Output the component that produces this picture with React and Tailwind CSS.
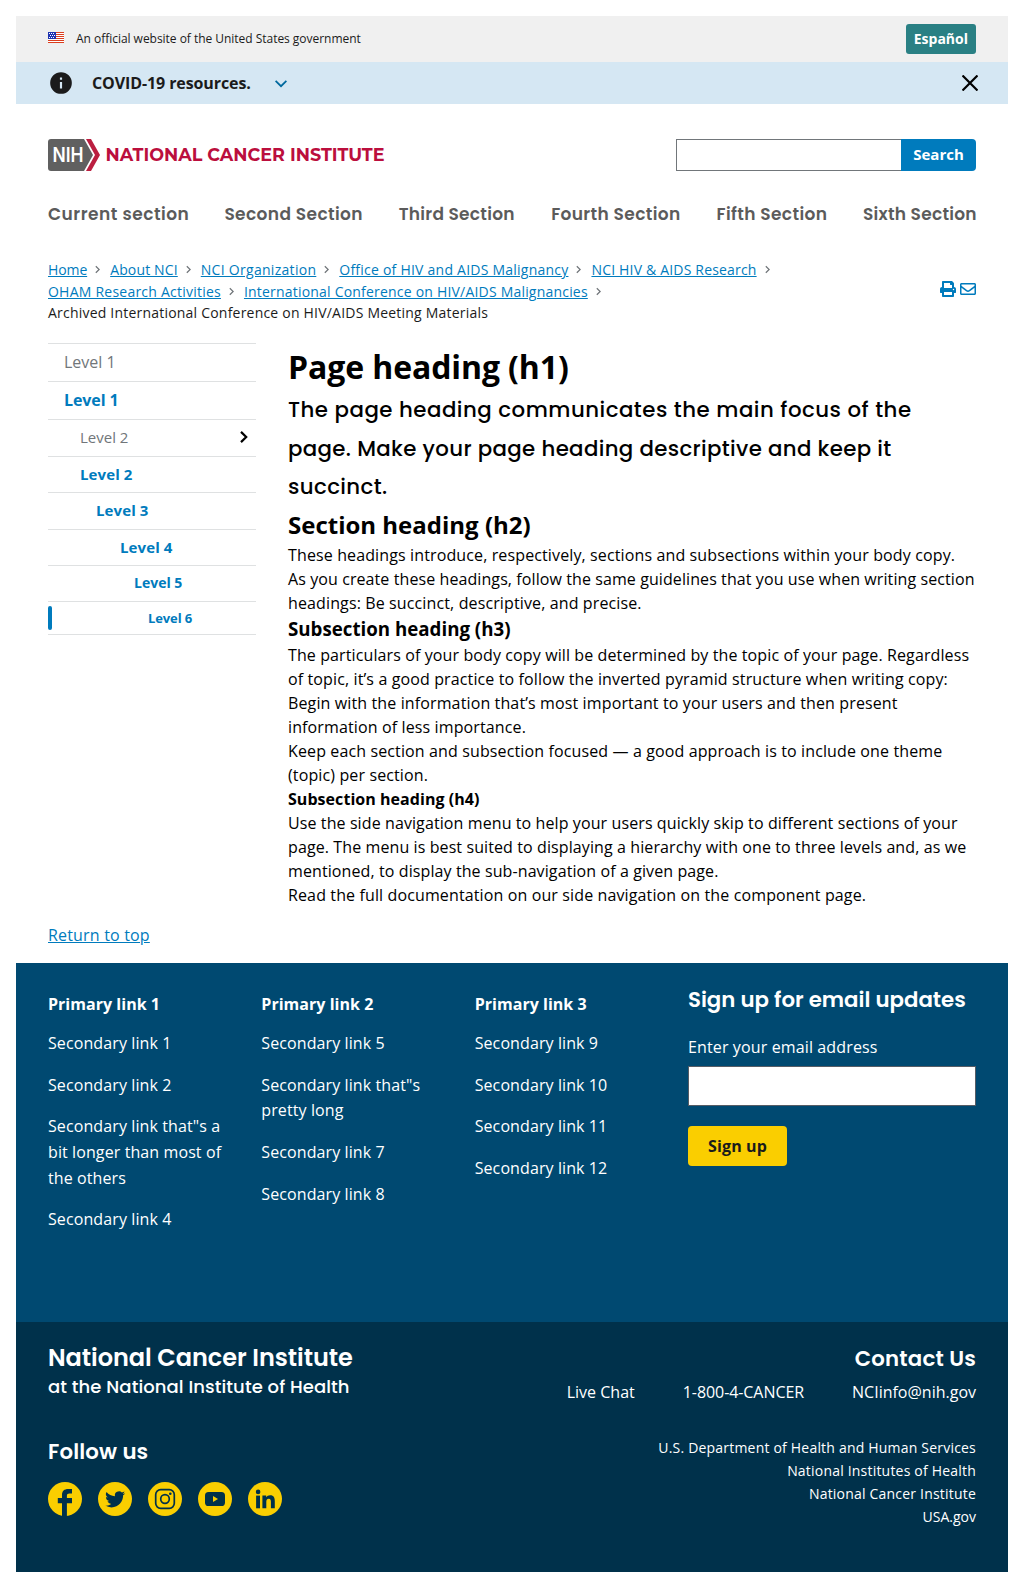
import React from "react";

const crumbs = [
  ["Home", "tracking-[-0.1px]"],
  ["About NCI", "tracking-[0.14px]"],
  ["NCI Organization", "tracking-[0.29px]"],
  ["Office of HIV and AIDS Malignancy", "tracking-[0.23px]"],
  ["NCI HIV & AIDS Research", "tracking-[0.18px]"],
  ["OHAM Research Activities", "tracking-[0.23px]"],
  ["International Conference on HIV/AIDS Malignancies", "tracking-[0.2px]"],
];

const nav = [
  ["Current section", "w-[140px] tracking-[0.5px]"],
  ["Second Section", "w-[138px] tracking-[0.38px]"],
  ["Third Section", "w-[116px] tracking-[0.25px]"],
  ["Fourth Section", "w-[129px] tracking-[0.37px]"],
  ["Fifth Section", "w-[110px] tracking-[0.37px]"],
  ["Sixth Section", "w-[113px] tracking-[0.25px]"],
];

const side = [
  ["Level 1", "h-[38px] pl-4 pb-px text-[16px] text-[#71767a]"],
  ["Level 1", "h-[38px] pl-4 pb-px text-[16px] font-bold tracking-[-0.1px] text-[#007bbd]"],
  ["Level 2", "h-[37px] pl-8 pb-[2px] text-[15px] text-[#71767a]", true],
  ["Level 2", "h-[36px] pl-8 pb-px text-[15px] font-bold tracking-[0.1px] text-[#007bbd]"],
  ["Level 3", "h-[37px] pl-12 pb-[2px] text-[15px] font-bold tracking-[0.1px] text-[#007bbd]"],
  ["Level 4", "h-[36px] pl-[72px] pb-px text-[15px] font-bold tracking-[0.1px] text-[#007bbd]"],
  ["Level 5", "h-[36px] pl-[86px] pb-px text-[14px] font-bold text-[#007bbd]"],
  ["Level 6", "h-[33px] pl-[100px] text-[13px] font-bold tracking-[-0.1px] text-[#007bbd]"],
];

const columns = [
  ["Primary link 1", ["Secondary link 1", "Secondary link 2", 'Secondary link that"s a bit longer than most of the others', "Secondary link 4"]],
  ["Primary link 2", ["Secondary link 5", 'Secondary link that"s pretty long', "Secondary link 7", "Secondary link 8"]],
  ["Primary link 3", ["Secondary link 9", "Secondary link 10", "Secondary link 11", "Secondary link 12"]],
];

function Flag() {
  return (
    <svg width="16" height="11" viewBox="0 0 16 11" shapeRendering="crispEdges">
      <rect width="16" height="11" fill="#fff" />
      {[0, 2, 4, 6, 8, 10].map((y) => (
        <rect key={y} y={y} width="16" height="1" fill="#db3e1f" />
      ))}
      <rect width="8" height="7" fill="#1e33b1" />
      {[[1, 1], [3, 1], [5, 1], [2, 3], [4, 3], [6, 3], [1, 5], [3, 5], [5, 5]].map(([x, y]) => (
        <rect key={x + "-" + y} x={x} y={y} width="1" height="1" fill="#fff" />
      ))}
    </svg>
  );
}

function Chevron({ className, size }) {
  return (
    <svg className={className} width={size} height={size} viewBox="0 0 24 24" fill="currentColor">
      <path d="M10 6 8.59 7.41 13.17 12l-4.58 4.59L10 18l6-6z" />
    </svg>
  );
}

function Logo() {
  return (
    <svg width="338" height="32" viewBox="0 0 338 32">
      <path d="M3 0h33l9 16-9 16H3a3 3 0 0 1-3-3V3a3 3 0 0 1 3-3z" fill="#606060" />
      <path d="M38 0h5l9 16-9 16h-5l9-16z" fill="#bb1f40" />
      <text x="4.5" y="23.3" textLength="31" lengthAdjust="spacingAndGlyphs" fill="#fff" fontFamily="Inter, sans-serif" fontWeight="600" fontSize="19.5">NIH</text>
      <text x="57.5" y="22" textLength="279" lengthAdjust="spacingAndGlyphs" fill="#bb0e3d" fontFamily="Montserrat, Inter, sans-serif" fontWeight="700" fontSize="18">NATIONAL CANCER INSTITUTE</text>
    </svg>
  );
}

const glyphs = [
  <path key="f" d="M14 34V21.2H9.8V16H14v-3C14 9 16.2 7 20.3 7H24v4.6h-2.6c-1.7 0-2.5.8-2.5 2.2V16H24v5.2h-5.1V34z" />,
  <path key="t" transform="translate(7.2 7.4) scale(.83)" d="M23.95 4.57a10 10 0 0 1-2.82.77 4.96 4.96 0 0 0 2.16-2.72c-.95.56-2 .96-3.13 1.18a4.92 4.92 0 0 0-8.38 4.48C7.69 8.1 4.07 6.13 1.64 3.16a4.92 4.92 0 0 0 1.52 6.57 4.9 4.9 0 0 1-2.23-.61v.06a4.92 4.92 0 0 0 3.95 4.83 5 5 0 0 1-2.21.08 4.94 4.94 0 0 0 4.6 3.42A9.87 9.87 0 0 1 0 19.54a14 14 0 0 0 7.55 2.21c9.05 0 14-7.5 14-13.98 0-.21 0-.42-.02-.63a9.94 9.94 0 0 0 2.46-2.55z" />,
  <g key="i">
    <rect x="7.7" y="7.7" width="18.6" height="18.6" rx="5" fill="none" stroke="#00314b" strokeWidth="1.7" />
    <circle cx="17" cy="17" r="4.3" fill="none" stroke="#00314b" strokeWidth="1.7" />
    <circle cx="22.3" cy="11.7" r="1.3" />
  </g>,
  <g key="y">
    <rect x="7" y="10" width="20" height="14" rx="3.6" />
    <path d="M15 14v6l5-3z" fill="#face00" />
  </g>,
  <g key="l">
    <circle cx="10.1" cy="9.9" r="2.3" />
    <path d="M8.1 13.6H12V26.3H8.1z" />
    <path d="M14.4 13.6H18.2V15.3C18.9 14.1 20.3 13.3 22.1 13.3C26 13.3 26.8 15.9 26.8 19.4V26.3H22.9V20.2C22.9 18.7 22.8 16.8 20.8 16.8C18.7 16.8 18.3 18.4 18.3 20.1V26.3H14.4Z" />
  </g>,
];

export default function App() {
  return (
    <div className="h-[1588px] w-[1024px] bg-white p-4 font-['Open_Sans',sans-serif] text-[16px] leading-6 text-black">
      <div className="flex h-[46px] items-center bg-[#f0f0f0] px-8 text-[#1b1b1b]">
        <div className="-mt-[3px]"><Flag /></div>
        <span className="ml-3 text-[12px] tracking-[-0.03px]">An official website of the United States government</span>
        <button className="ml-auto h-[30px] rounded-[3px] bg-[#2a8084] px-2 text-[14px] font-bold text-white">Español</button>
      </div>
      <div className="flex h-[42px] items-center bg-[#d5e7f3] text-[#1b1b1b]">
        <svg className="ml-8" width="26" height="26" viewBox="0 0 24 24" fill="#1b1b1b">
          <path d="M12 2a10 10 0 1 0 0 20 10 10 0 0 0 0-20zm1 15h-2v-6h2zm0-8h-2V7h2z" />
        </svg>
        <span className="ml-[18px] font-bold tracking-[-0.1px]">COVID-19 resources.</span>
        <svg className="ml-6 mt-px" width="12" height="8" viewBox="0 0 12 8" fill="none" stroke="#00699e" strokeWidth="1.8">
          <path d="M.6.8 6 6.2 11.4.8" />
        </svg>
        <svg className="ml-auto mr-[30px]" width="16" height="16" viewBox="0 0 16 16" stroke="#000" strokeWidth="2.2">
          <path d="M.5.5l15 15M15.5.5l-15 15" />
        </svg>
      </div>

      <header className="px-8 pt-[35px]">
        <div className="flex h-8 items-center justify-between">
          <Logo />
          <div className="flex h-8 w-[300px]">
            <div className="flex-1 border border-r-0 border-[#71767a] bg-white" />
            <button className="w-[75px] rounded-r-[4px] bg-[#007bbd] pb-[2px] text-[15px] font-bold text-white">Search</button>
          </div>
        </div>
        <nav className="mt-[29px] flex h-7 items-center justify-between font-[Poppins,Inter,sans-serif] text-[17px] font-semibold text-[#5b5b5b]">
          {nav.map(([t, w]) => (
            <span key={t} className={w + " whitespace-nowrap"}>{t}</span>
          ))}
        </nav>
      </header>

      <div className="mt-[31px] flex h-16 items-center justify-between px-8">
        <ol className="flex w-[800px] flex-wrap text-[14px] leading-[22px] tracking-[0.21px]">
          {crumbs.map(([c, cls]) => (
            <li key={c} className="flex h-[22px] items-center">
              <a className={"text-[#007bbd] underline " + cls}>{c}</a>
              <Chevron size={15} className="ml-[3px] mr-[5px] text-[#71767a]" />
            </li>
          ))}
          <li className="-mt-px w-full text-[#1b1b1b]">Archived International Conference on HIV/AIDS Meeting Materials</li>
        </ol>
        <div className="-mt-1 flex items-center gap-1 text-[#007bbd]">
          <svg width="16" height="16" viewBox="0 0 512 512" fill="currentColor">
            <path d="M448 192V77.25c0-8.49-3.37-16.62-9.37-22.63L393.37 9.37c-6-6-14.14-9.37-22.63-9.37H96C78.33 0 64 14.33 64 32v160c-35.35 0-64 28.65-64 64v112c0 8.84 7.16 16 16 16h48v96c0 17.67 14.33 32 32 32h320c17.67 0 32-14.33 32-32v-96h48c8.84 0 16-7.16 16-16V256c0-35.35-28.65-64-64-64zm-64 256H128v-96h256v96zm0-224H128V64h192v48c0 8.84 7.16 16 16 16h48v96zm48 72c-13.25 0-24-10.75-24-24 0-13.26 10.75-24 24-24s24 10.74 24 24c0 13.25-10.75 24-24 24z" />
          </svg>
          <svg width="16" height="16" viewBox="0 0 512 512" fill="currentColor">
            <path d="M464 64H48C21.49 64 0 85.49 0 112v288c0 26.51 21.49 48 48 48h416c26.51 0 48-21.49 48-48V112c0-26.51-21.49-48-48-48zm0 48v40.805c-22.422 18.259-58.168 46.651-134.587 106.49-16.841 13.247-50.201 45.072-73.413 44.701-23.208.375-56.579-31.459-73.413-44.701C106.18 199.465 70.425 171.067 48 152.805V112h416zM48 400V214.398c22.914 18.251 55.409 43.862 104.938 82.646 21.857 17.205 60.134 55.186 103.062 54.955 42.717.231 80.509-37.199 103.053-54.947 49.528-38.783 82.032-64.401 104.947-82.653V400H48z" />
          </svg>
        </div>
      </div>

      <div className="mt-5 flex h-[564px] gap-8 px-8">
        <aside className="w-[208px] shrink-0">
          <ul className="border-t border-[#dfe1e2]">
            {side.map(([t, cls, more], i) => (
              <li key={i} className={"relative flex items-center border-b border-[#dfe1e2] " + cls}>
                {i === 7 && <span className="absolute left-0 top-[4px] h-6 w-1 rounded-full bg-[#007bbd]" />}
                {t}
                {more && (
                  <svg className="ml-auto mr-2" width="8" height="12" viewBox="0 0 8 12" fill="none" stroke="#000" strokeWidth="2.2">
                    <path d="M1 .9 6.2 6 1 11.1" />
                  </svg>
                )}
              </li>
            ))}
          </ul>
        </aside>
        <main className="w-[688px] whitespace-nowrap tracking-[0.125px]">
          <h1 className="text-[32px] font-bold leading-[48px] tracking-[-0.1px]">Page heading (h1)</h1>
          <p className="font-[Poppins,Inter,sans-serif] text-[21.3px] font-medium leading-[38.6px]">
            <span className="block tracking-[0.5px]">The page heading communicates the main focus of the</span>
            <span className="block tracking-[0.34px]">page. Make your page heading descriptive and keep it</span>
            <span className="block tracking-[0.4px]">succinct.</span>
          </p>
          <h2 className="text-[24px] font-bold leading-9 tracking-normal">Section heading (h2)</h2>
          <p>
            These headings introduce, respectively, sections and subsections within your body copy.<br />
            <span className="tracking-[0.09px]">As you create these headings, follow the same guidelines that you use when writing section</span><br />
            headings: Be succinct, descriptive, and precise.
          </p>
          <h3 className="text-[18.72px] font-bold leading-7 tracking-normal">Subsection heading (h3)</h3>
          <p>
            <span className="tracking-[0.11px]">The particulars of your body copy will be determined by the topic of your page. Regardless</span><br />
            of topic, it’s a good practice to follow the inverted pyramid structure when writing copy:<br />
            Begin with the information that’s most important to your users and then present<br />
            information of less importance.
          </p>
          <p>
            Keep each section and subsection focused — a good approach is to include one theme<br />
            (topic) per section.
          </p>
          <h4 className="font-bold tracking-[0.05px]">Subsection heading (h4)</h4>
          <p className="tracking-[0.1px]">
            Use the side navigation menu to help your users quickly skip to different sections of your<br />
            page. The menu is best suited to displaying a hierarchy with one to three levels and, as we<br />
            mentioned, to display the sub-navigation of a given page.
          </p>
          <p>Read the full documentation on our side navigation on the component page.</p>
        </main>
      </div>
      <div className="mt-4 px-8"><a className="tracking-[0.18px] text-[#007bbd] underline">Return to top</a></div>

      <footer className="mt-4 text-white">
        <div className="flex h-[359px] bg-[#004971] px-8 pt-[29px]">
          {columns.map(([head, links]) => (
            <div key={head} className="w-[213.33px] shrink-0 pr-8 leading-[25.6px] tracking-[0.1px]">
              <p className="mb-[13.7px] font-bold tracking-[0.03px]">{head}</p>
              <ul className="flex flex-col gap-4">
                {links.map((l) => <li key={l}>{l}</li>)}
              </ul>
            </div>
          ))}
          <div className="w-[288px] shrink-0">
            <h3 className="-mt-2 whitespace-nowrap font-[Poppins,Inter,sans-serif] text-[21.3px] font-semibold leading-8">Sign up for email updates</h3>
            <label className="mt-[19px] block tracking-[0.13px]">Enter your email address</label>
            <div className="mt-[7px] h-10 border border-[#565c65] bg-white" />
            <button className="mt-5 h-10 w-[99px] rounded-[4px] bg-[#face00] font-bold tracking-[0.1px] text-[#1b1b1b]">Sign up</button>
          </div>
        </div>
        <div className="flex h-[250px] justify-between bg-[#00314b] px-8 pt-5">
          <div className="font-[Poppins,Inter,sans-serif]">
            <h2 className="text-[24px] font-semibold leading-8 tracking-[-0.04px]">National Cancer Institute</h2>
            <p className="text-[18px] font-medium leading-[26px] tracking-[0.08px]">at the National Institute of Health</p>
            <h3 className="mt-[36px] text-[21.3px] font-semibold leading-8 tracking-[0.15px]">Follow us</h3>
            <div className="mt-[14px] flex gap-4">
              {glyphs.map((g, i) => (
                <svg key={i} width="34" height="34" viewBox="0 0 34 34" fill="#00314b">
                  <circle cx="17" cy="17" r="17" fill="#face00" />
                  {g}
                </svg>
              ))}
            </div>
          </div>
          <div className="pt-px text-right">
            <h3 className="font-[Poppins,Inter,sans-serif] text-[21.3px] font-semibold leading-8 tracking-[0.2px]">Contact Us</h3>
            <div className="mt-[5px] flex justify-end gap-12">
              <span>Live Chat</span><span className="tracking-[-0.07px]">1-800-4-CANCER</span><span>NCIinfo@nih.gov</span>
            </div>
            <div className="mt-[32px] text-[14px] leading-[23px] tracking-[0.2px]">
              <p>U.S. Department of Health and Human Services</p>
              <p>National Institutes of Health</p>
              <p>National Cancer Institute</p>
              <p className="tracking-normal">USA.gov</p>
            </div>
          </div>
        </div>
      </footer>
    </div>
  );
}
